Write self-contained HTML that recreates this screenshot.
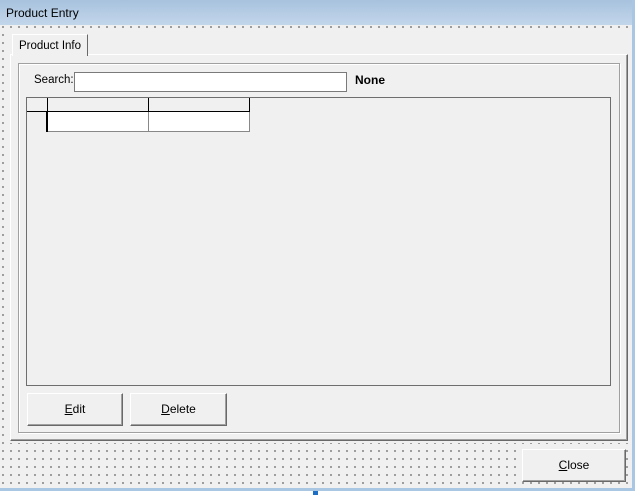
<!DOCTYPE html>
<html><head><style>
body{margin:0;width:635px;height:495px;background:#fff;position:relative;overflow:hidden;font-family:"Liberation Sans",sans-serif;font-size:12px;color:#000}
.abs{position:absolute;box-sizing:border-box}
#form{left:0;top:0;width:635px;height:491px;background-color:#f0f0f0;background-image:radial-gradient(circle,#333 0.6px,transparent 0.9px);background-size:8px 8px;background-position:-1px 23px;border-right:3px solid #a9c6e3;border-bottom:3px solid #a9c6e3}
#title{left:0;top:0;width:632px;height:25px;background:linear-gradient(#a7c2de,#c3d6ea);padding:6px 0 0 6px;font-size:12px}
.btn{background:#f0f0f0;border:1px solid;border-color:#fff #696969 #696969 #fff;box-shadow:inset -1px -1px #a0a0a0;text-align:center;line-height:30px}
</style></head><body>
<div id="form" class="abs"></div>
<div id="title" class="abs">Product Entry</div>
<div class="abs" style="left:8px;top:29px;width:622px;height:414px;background:#f0f0f0"></div>
<div class="abs" style="left:10px;top:54px;width:618px;height:387px;background:#f0f0f0;border:1px solid;border-color:#fff #696969 #696969 #fff;box-shadow:inset -1px -1px #a0a0a0"></div>
<div class="abs" style="left:12px;top:34px;width:76px;height:22px;background:#f0f0f0;border:1px solid;border-color:#fff #696969 transparent #fff;border-bottom:none;padding:5px 0 0 6px;font-size:11.5px">Product Info</div>
<div class="abs" style="left:18px;top:63px;width:602px;height:370px;border:1px solid #a0a0a0;box-shadow:1px 1px #fff, inset 1px 1px #fff"></div>
<div class="abs" style="left:34px;top:74px;font-size:11.5px">Search:</div>
<div class="abs" style="left:74px;top:72px;width:273px;height:20px;background:#fff;border:1px solid #7a7a7a"></div>
<div class="abs" style="left:355px;top:73px;font-weight:bold;font-size:12px">None</div>
<div class="abs" style="left:26px;top:97px;width:585px;height:289px;border:1px solid #6e6e6e;background:#f0f0f0"></div>
<div class="abs" style="left:27px;top:98px;width:223px;height:34px;">
 <div class="abs" style="left:0;top:0;width:21px;height:14px;border-right:1px solid #000;border-bottom:1px solid #000"></div>
 <div class="abs" style="left:21px;top:0;width:101px;height:14px;border-right:1px solid #000;border-bottom:1px solid #000"></div>
 <div class="abs" style="left:122px;top:0;width:101px;height:14px;border-right:1px solid #000;border-bottom:1px solid #000"></div>
 <div class="abs" style="left:0;top:14px;width:21px;height:20px;border-right:2px solid #000"></div>
 <div class="abs" style="left:21px;top:14px;width:101px;height:20px;background:#fff;border-right:1px solid #888;border-bottom:1px solid #888"></div>
 <div class="abs" style="left:122px;top:14px;width:101px;height:20px;background:#fff;border-right:1px solid #888;border-bottom:1px solid #888"></div>
</div>
<div class="abs btn" style="left:27px;top:393px;width:96px;height:33px"><u>E</u>dit</div>
<div class="abs btn" style="left:130px;top:393px;width:97px;height:33px"><u>D</u>elete</div>
<div class="abs btn" style="left:522px;top:449px;width:104px;height:33px"><u>C</u>lose</div>
<div class="abs" style="left:313px;top:491px;width:5px;height:4px;background:#1c6fc4"></div>
</body></html>
